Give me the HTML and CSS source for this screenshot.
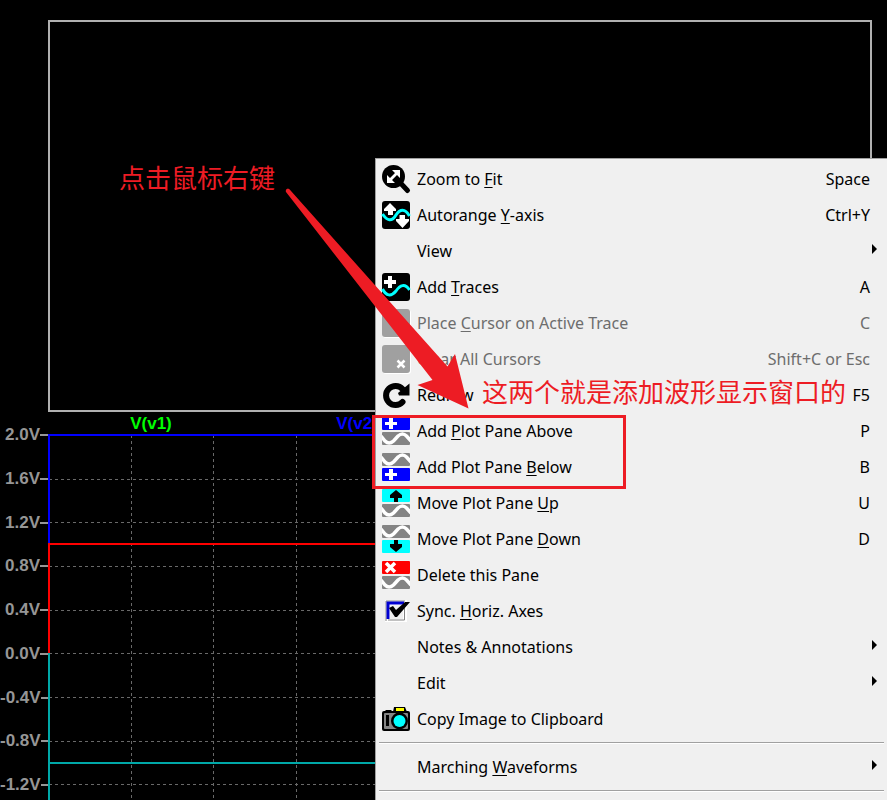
FILE: index.html
```html
<!DOCTYPE html>
<html lang="zh-CN">
<head>
<meta charset="utf-8">
<title>Waveform viewer</title>
<link rel="stylesheet" href="styles.css">
</head>
<body>
<svg class="defs" width="0" height="0" aria-hidden="true">
  <defs>
    <symbol id="wave" viewBox="0 0 28 13">
      <rect width="28" height="13" rx="1" fill="#848484"/>
      <path d="M-1 4 L3 9 Q7 13 11.500 9 L16 4 Q20.500 0 24.500 4 L29 9" fill="none" stroke="#fff" stroke-width="3.500"/>
    </symbol>
  </defs>
</svg>

<main class="viewer">
  <section class="pane-empty" aria-label="Empty plot pane"></section>
  <section class="pane-plot" aria-label="Plot pane">
    <div class="trace-names">
      <span class="name-v1">V(v1)</span>
      <span class="name-v2">V(v2)</span>
    </div>
    <div class="plot-row">
      <div class="axis">
        <span>2.0V</span><span>1.6V</span><span>1.2V</span><span>0.8V</span><span>0.4V</span><span>0.0V</span><span>-0.4V</span><span>-0.8V</span><span>-1.2V</span>
      </div>
      <svg class="plot" aria-hidden="true">
        <g class="grid" transform="translate(1 0)">
          <line x1="10%" x2="10%" y1="1" y2="100%"/>
          <line x1="20%" x2="20%" y1="1" y2="100%"/>
          <line x1="30%" x2="30%" y1="1" y2="100%"/>
          <line x1="40%" x2="40%" y1="1" y2="100%"/>
          <line x1="0" x2="100%" y1="45" y2="45"/>
          <line x1="0" x2="100%" y1="88" y2="88"/>
          <line x1="0" x2="100%" y1="132" y2="132"/>
          <line x1="0" x2="100%" y1="176" y2="176"/>
          <line x1="0" x2="100%" y1="219" y2="219"/>
          <line x1="0" x2="100%" y1="263" y2="263"/>
          <line x1="0" x2="100%" y1="307" y2="307"/>
          <line x1="0" x2="100%" y1="350" y2="350"/>
        </g>
        <g class="traces">
          <rect x="0" y="219" width="2" height="100%" fill="#00a8a8"/>
          <rect x="0" y="328" width="100%" height="2" fill="#00a8a8"/>
          <rect x="0" y="110" width="2" height="109" fill="#f00"/>
          <rect x="0" y="109" width="100%" height="2" fill="#f00"/>
          <rect x="0" y="0" width="2" height="109" fill="#00f"/>
          <rect x="0" y="0" width="100%" height="2" fill="#00f"/>
        </g>
      </svg>
    </div>
  </section>
</main>

<nav class="menu" aria-label="Plot">
  <button class="item">
    <svg class="icon" viewBox="0 0 28 28"><circle cx="11.500" cy="11.500" r="11.500"/><path d="M18 17.500 L25.500 25.500" stroke="#000" stroke-width="5" stroke-linecap="round"/><path d="M10 5 H18 V13 L15 10 L10 15 L13 18 H5 V10 L8 13 L13 8 Z" fill="#fff"/></svg>
    <span>Zoom to <u>F</u>it</span><kbd>Space</kbd></button>
  <button class="item">
    <svg class="icon" viewBox="0 0 28 28"><rect width="28" height="28" rx="3"/><path d="M0.500 13 C5 20 10 21 14 14 C18 8 23 7 27.500 15" fill="none" stroke="#0ff" stroke-width="3"/><path d="M8 2 L14 8 V10 H11 V14 H6 V10 H2 V8 Z M17.500 14 H23 V18 H27 V20 L20.500 27 L14 20 V18 H17.500 Z" fill="#fff"/></svg>
    <span>Autorange <u>Y</u>-axis</span><kbd>Ctrl+Y</kbd></button>
  <button class="item sub"><i class="icon"></i><span>View</span></button>
  <button class="item">
    <svg class="icon" viewBox="0 0 28 28"><rect width="28" height="28" rx="3"/><path d="M0.500 16 C4 23 9 24 14 18 C18 12 23 10 27.500 17" fill="none" stroke="#0ff" stroke-width="3"/><path d="M6 3 H10 V7 H14 V11 H10 V15 H6 V11 H2 V7 H6 Z" fill="#fff"/></svg>
    <span>Add <u>T</u>races</span><kbd>A</kbd></button>
  <button class="item" disabled>
    <svg class="icon" viewBox="0 0 28 28"><rect x="1" y="1" width="28" height="28" rx="3" fill="#fff"/><rect width="28" height="28" rx="3" fill="#a0a0a0"/></svg>
    <span>Place <u>C</u>ursor on Active Trace</span><kbd>C</kbd></button>
  <button class="item" disabled>
    <svg class="icon" viewBox="0 0 28 28"><rect x="1" y="1" width="28" height="28" rx="3" fill="#fff"/><rect width="28" height="28" rx="3" fill="#a0a0a0"/><path d="M15.500 15.500 L22.500 22.500 M22.500 15.500 L15.500 22.500" stroke="#fff" stroke-width="2.500"/></svg>
    <span>Clear All Cursors</span><kbd>Shift+C or Esc</kbd></button>
  <button class="item">
    <svg class="icon" viewBox="0 0 28 28"><path d="M20.500 21 A9.500 9.500 0 1 1 20.500 8" fill="none" stroke="#000" stroke-width="6" stroke-linecap="round"/><path d="M27.500 2.500 V14.500 H17 L16 12 Z"/></svg>
    <span>Redraw</span><kbd>F5</kbd></button>
  <button class="item">
    <svg class="icon" viewBox="0 0 28 28"><rect width="28" height="13" rx="1" fill="#00f"/><path d="M7 1 H11 V5 H15 V8 H11 V12 H7 V8 H3 V5 H7 Z" fill="#fff"/><use href="#wave" y="15" width="28" height="13"/></svg>
    <span>Add <u>P</u>lot Pane Above</span><kbd>P</kbd></button>
  <button class="item">
    <svg class="icon" viewBox="0 0 28 28"><use href="#wave" width="28" height="13"/><rect y="15" width="28" height="13" rx="1" fill="#00f"/><path d="M7 16 H11 V20 H15 V23 H11 V27 H7 V23 H3 V20 H7 Z" fill="#fff"/></svg>
    <span>Add Plot Pane <u>B</u>elow</span><kbd>B</kbd></button>
  <button class="item">
    <svg class="icon" viewBox="0 0 28 28"><rect width="28" height="13" rx="1" fill="#0ff"/><path d="M14 1 L20 6 V9 H16 V13 H12 V9 H8 V6 Z"/><use href="#wave" y="15" width="28" height="13"/></svg>
    <span>Move Plot Pane <u>U</u>p</span><kbd>U</kbd></button>
  <button class="item">
    <svg class="icon" viewBox="0 0 28 28"><use href="#wave" width="28" height="13"/><rect y="15" width="28" height="13" rx="1" fill="#0ff"/><path d="M14 27 L20 22 V19 H16 V15 H12 V19 H8 V22 Z"/></svg>
    <span>Move Plot Pane <u>D</u>own</span><kbd>D</kbd></button>
  <button class="item">
    <svg class="icon" viewBox="0 0 28 28"><rect width="28" height="13" rx="1" fill="#f00"/><path d="M4 2 L13 11 M13 2 L4 11" stroke="#fff" stroke-width="3.500"/><use href="#wave" y="15" width="28" height="13"/></svg>
    <span>Delete this Pane</span></button>
  <button class="item">
    <svg class="icon" viewBox="0 0 28 28"><path d="M3 3 H25 V25 H3 Z" fill="#fff"/><path d="M4 24 V4 H23" fill="none" stroke="#848484"/><path d="M6 22 V6 H22" fill="none" stroke="#0000d0" stroke-width="3"/><path d="M8 8 H21 V22 H8 Z" fill="#f0f0f0"/><path d="M22.500 9 V23 H6" fill="none" stroke="#848484"/><path d="M7 11 L11 9 L14 13 L23 5 H28 L15 20 H13 Z"/></svg>
    <span>Sync. <u>H</u>oriz. Axes</span></button>
  <button class="item sub"><i class="icon"></i><span>Notes &amp; Annotations</span></button>
  <button class="item sub"><i class="icon"></i><span>Edit</span></button>
  <button class="item">
    <svg class="icon" viewBox="0 0 28 28"><rect y="6" width="28" height="20" rx="2"/><path d="M4 5 H9 L11 7 H2 Z M12 2 H23 L25 7 H11 Z"/><rect x="2" y="8" width="24" height="16" rx="1" fill="#848484"/><rect x="4" y="10" width="3" height="11"/><circle cx="17.500" cy="16" r="8.500"/><circle cx="17.500" cy="16" r="6" fill="#0ff"/><rect x="14" y="3" width="8" height="3" fill="#ff0"/></svg>
    <span>Copy Image to Clipboard</span></button>
  <hr>
  <button class="item sub"><i class="icon"></i><span>Marching <u>W</u>aveforms</span></button>
  <hr>
</nav>

<div class="notes">
  <svg class="pointer" aria-hidden="true"><path d="M286 192 Q285 189 288 188.500 Q290 189 291 191 L447.500 366.500 L455 354 L468.500 408.500 L417.500 385 L432.500 380 Z" fill="#ed1c24"/></svg>
  <p class="note note-click">点击鼠标右键</p>
  <p class="note note-panes">这两个就是添加波形显示窗口的</p>
  <div class="frame"></div>
</div>
</body>
</html>
```
FILE: styles.css
```css
* { box-sizing: border-box; }

body {
  margin: 0;
  height: 100vh;
  overflow: hidden;
  position: relative;
  background: #000;
  font-family: "Noto Sans", "Noto Sans CJK SC", sans-serif;
  font-size: 16px;
}

.defs { position: absolute; }

.viewer {
  height: 100%;
  display: flex;
  flex-direction: column;
  padding: 20px 15px 0 0;
}

.pane-empty {
  flex: none;
  height: 392px;
  margin-left: 48px;
  border: 2px solid #b0b0b0;
}

.pane-plot {
  flex: 1;
  min-height: 0;
  display: flex;
  flex-direction: column;
  font-family: "Liberation Sans", Arial, sans-serif;
  font-size: 17px;
  font-weight: bold;
}

.trace-names {
  display: grid;
  grid-template-columns: repeat(4, 1fr);
  margin-left: 48px;
  height: 22px;
  line-height: 24px;
  text-align: center;
}
.name-v1 { color: #0f0; }
.name-v2 { color: #00f; }

.plot-row {
  flex: 1;
  min-height: 0;
  display: flex;
}

/* Labels spread evenly so each one is centred on its grid line. */
.axis {
  flex: none;
  width: 48px;
  height: 370px;
  margin-top: -9px;
  display: flex;
  flex-direction: column;
  justify-content: space-between;
  color: #969696;
  line-height: 20px;
}
.axis span {
  display: flex;
  align-items: center;
  justify-content: flex-end;
}
.axis span::after {
  content: "";
  width: 8px;
  height: 2px;
  background: #969696;
}

.plot {
  flex: 1;
  min-width: 0;
  height: 100%;
  shape-rendering: crispEdges;
}
.grid line {
  stroke: #696969;
  stroke-dasharray: 3 3;
}

.menu {
  position: absolute;
  left: 375px;
  right: 0;
  top: 158px;
  min-height: calc(100% - 158px);
  padding-top: 2px;
  background: #f0f0f0;
  border: solid #a0a0a0;
  border-width: 1px 0 0 1px;
}

.item {
  display: flex;
  align-items: center;
  gap: 7px;
  width: 100%;
  height: 36px;
  padding: 0 17px 0 6px;
  border: 0;
  background: none;
  color: #000;
  font: inherit;
  text-align: left;
}
.item:hover:enabled { background: #dcdcdc; }
.item:disabled { color: #6d6d6d; }
.item span { flex: 1; }
.item kbd { font: inherit; }
.item u { text-underline-offset: 2px; }
.item.sub { padding-right: 10px; }
.item.sub::after {
  content: "";
  margin-bottom: 5px;
  border: solid transparent;
  border-width: 5px 0 5px 5px;
  border-left-color: #000;
}

.icon {
  flex: none;
  width: 28px;
  height: 28px;
  overflow: visible;
}

.menu hr {
  height: 2px;
  margin: 5px 3px;
  border: 0;
  border-top: 1px solid #a0a0a0;
  background: #fff;
}

/* Hand-drawn marks laid over the window. */
.notes {
  position: absolute;
  inset: 0;
  pointer-events: none;
}
.pointer {
  position: absolute;
  width: 100%;
  height: 100%;
}
.note {
  position: absolute;
  margin: 0;
  color: #ed1c24;
  font-family: "Noto Sans CJK SC", sans-serif;
  font-size: 26px;
  font-weight: 400;
  line-height: 32px;
  white-space: nowrap;
}
.note-click { left: 119px; top: 161px; }
.note-panes { left: 482px; top: 375px; }
.frame {
  position: absolute;
  left: 372px;
  top: 415px;
  width: 254px;
  height: 74px;
  border: 3px solid #ed1c24;
}
```
